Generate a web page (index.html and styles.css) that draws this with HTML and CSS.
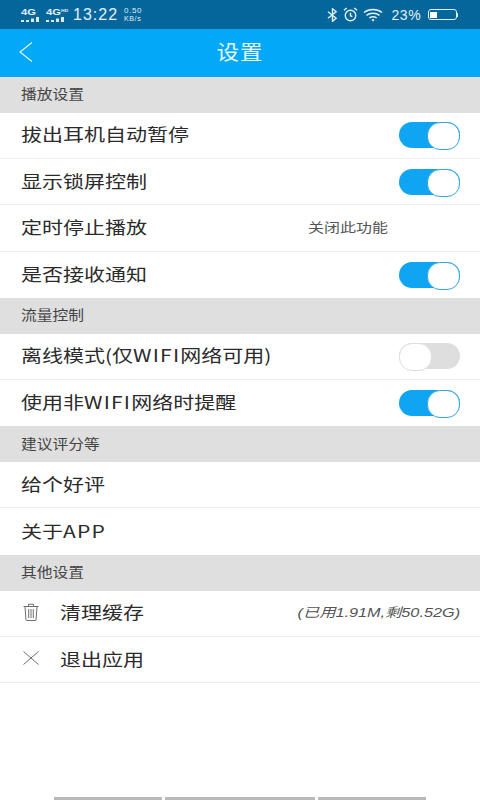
FILE: index.html
```html
<!DOCTYPE html>
<html lang="zh">
<head>
<meta charset="utf-8">
<title>设置</title>
<link rel="stylesheet" href="styles.css">
</head>
<body>
<div class="app">
  <div class="status">
    <div class="status-left">
      <div class="sig"><span class="sig-t">4G</span><svg width="19" height="5" viewBox="0 0 19 5"><path d="M0 3h3v2H0zM5 3h3v2H5zM10 1.500h3V5h-3zM15 0h3v5h-3z" fill="#dcebf3"/></svg></div>
      <div class="sig sig2"><span class="sig-t">4G<sup class="hd">HD</sup></span><svg width="19" height="5" viewBox="0 0 19 5"><path d="M0 3h3v2H0zM5 3h3v2H5zM10 1.500h3V5h-3zM15 0h3v5h-3z" fill="#dcebf3"/></svg></div>
      <span class="time">13:22</span>
      <span class="speed"><span>0.50</span><span class="speed-u">KB/s</span></span>
    </div>
    <div class="status-right">
      <svg class="ic-bt" width="11" height="14" viewBox="0 0 12 15" fill="none" stroke="#e4f0f6" stroke-width="1.500"><path d="M1 4l9 7-4 3.300V.7l4 3.300-9 7"/></svg>
      <svg class="ic-al" width="15" height="15" viewBox="0 0 16 16" fill="none" stroke="#e4f0f6" stroke-width="1.500"><circle cx="8" cy="9" r="5.600"/><path d="M8 6v3.300l2 1M1 3.500L4 1M15 3.500L12 1"/></svg>
      <svg class="ic-wf" width="20" height="14" viewBox="0 0 20 14" fill="none" stroke="#e4f0f6" stroke-width="1.500"><path d="M1 4.500C6 .5 14 .5 19 4.500M3.500 7.300C7 4.500 13 4.500 16.500 7.300M6.300 10C8.500 8.500 11.500 8.500 13.700 10"/><path d="M8.500 12L10 10.800l1.500 1.200L10 13.500z" fill="#e4f0f6" stroke="none"/></svg>
      <span class="pct">23%</span>
      <div class="batt"><div class="batt-fill"></div></div><div class="batt-tip"></div>
    </div>
  </div>
  <header class="nav">
    <svg class="back" width="14" height="20" viewBox="0 0 14 20" fill="none" stroke="#e6f7ff" stroke-width="1.100"><path d="M13 .5L1 10l12 9.500"/></svg>
    <h1 class="title">设置</h1>
  </header>

  <div class="sec"><span class="sec-t">播放设置</span></div>
  <div class="row"><span class="lbl">拔出耳机自动暂停</span><span class="sw on"></span></div>
  <div class="row"><span class="lbl">显示锁屏控制</span><span class="sw on"></span></div>
  <div class="row"><span class="lbl">定时停止播放</span><span class="val">关闭此功能</span></div>
  <div class="row last"><span class="lbl">是否接收通知</span><span class="sw on"></span></div>

  <div class="sec"><span class="sec-t">流量控制</span></div>
  <div class="row"><span class="lbl">离线模式(仅<span class="en">WIFI</span>网络可用)</span><span class="sw off"></span></div>
  <div class="row last"><span class="lbl">使用非<span class="en">WIFI</span>网络时提醒</span><span class="sw on"></span></div>

  <div class="sec"><span class="sec-t">建议评分等</span></div>
  <div class="row"><span class="lbl">给个好评</span></div>
  <div class="row last"><span class="lbl">关于<span class="en">APP</span></span></div>

  <div class="sec"><span class="sec-t">其他设置</span></div>
  <div class="row">
    <svg class="ic" width="16" height="18" viewBox="0 0 16 18" fill="none" stroke="#6e6e6e" stroke-width="1"><path d="M.5 3.500h15M5.500 3.300V1.200h5v2.100M2 3.500l1 13.500c0 .3.300.5.500.5h9c.2 0 .5-.2.500-.5l1-13.500M5.700 6v9M8 6v9M10.300 6v9"/></svg>
    <span class="lbl">清理缓存</span>
    <span class="cache">(已用1.91M,剩50.52G)</span>
  </div>
  <div class="row end">
    <svg class="ic" width="16" height="14" viewBox="0 0 16 14" fill="none" stroke="#6e6e6e" stroke-width="1"><path d="M.5 .5l15 13M15.500 .5l-15 13"/></svg>
    <span class="lbl">退出应用</span>
  </div>

  <div class="spacer"></div>
  <div class="home"><span class="seg s1"></span><span class="seg s2"></span><span class="seg s1"></span></div>
</div>
</body>
</html>
```
FILE: styles.css
```css
* { box-sizing: border-box; }
html, body { margin: 0; padding: 0; }
body { width: 480px; height: 800px; overflow: hidden; background: #fff; font-family: "Noto Sans CJK SC", "Liberation Sans", sans-serif; }
.app { width: 480px; height: 800px; display: flex; flex-direction: column; }

.status { height: 29px; background: #04669b; display: flex; justify-content: space-between; align-items: center; padding: 0 22px 0 21px; color: #e4f0f6; font-family: "Liberation Sans", sans-serif; }
.status-left, .status-right { display: flex; align-items: center; }
.sig { width: 19px; height: 15px; display: flex; flex-direction: column; line-height: 9px; margin-top: -1px; }
.sig svg { display: block; }
.sig-t { display: block; font-size: 9px; font-weight: 700; height: 10px; line-height: 10px; white-space: nowrap; transform: scaleX(1.25); transform-origin: left; }
.sig2 { margin-left: 6px; }
.hd { font-size: 4px; line-height: 4px; vertical-align: 3px; }
.time { font-size: 16px; margin-left: 8px; letter-spacing: 1px; }
.speed { display: flex; flex-direction: column; font-size: 8px; line-height: 7.500px; margin-left: 6px; letter-spacing: .6px; }
.speed-u { font-size: 7px; }
.ic-al { margin-left: 5px; }
.ic-wf { margin-left: 5px; }
.pct { font-size: 14px; margin-left: 8px; letter-spacing: .7px; }
.batt { width: 29px; height: 11px; border: 1px solid #e4f0f6; border-radius: 3px; margin-left: 6px; padding: 1.500px; }
.batt-fill { width: 7px; height: 100%; background: #fff; }
.batt-tip { width: 1.500px; height: 4px; background: #e4f0f6; }

.nav { height: 48px; background: #03a9f6; display: flex; align-items: center; justify-content: center; position: relative; padding-bottom: 4px; }
.back { position: absolute; left: 19px; top: 13px; }
.title { margin: 0; font-size: 20px; font-weight: 400; color: #e8f8ff; transform: scaleX(1.12); letter-spacing: 1px; }

.sec { height: 35.800px; background: #dfdfdf; display: flex; align-items: center; padding: 0 0 3px 21px; font-size: 13.500px; color: #444; }
.sec-t { display: block; transform: scaleX(1.167); transform-origin: left; }
.row { height: 46.300px; background: #fff; display: flex; align-items: center; padding: 0 20px 0 21px; border-bottom: 1px solid #efefef; }
.row.last { border-bottom: 0; }
.lbl { display: block; flex: none; font-size: 17.500px; line-height: 24px; color: #2b2b2b; white-space: nowrap; transform: scaleX(1.2); transform-origin: left; margin-top: -2px; }
.en { letter-spacing: 1px; }
.val { margin-left: auto; font-size: 13px; line-height: 20px; color: #555; margin-right: 72px; transform: scaleX(1.23); transform-origin: right; margin-top: -3px; }
.cache { margin-left: auto; font-size: 13px; line-height: 20px; font-style: italic; color: #555; font-family: "Liberation Sans", "Noto Sans CJK SC", sans-serif; transform: scaleX(1.25); transform-origin: right; margin-top: 0; }
.ic { flex: none; width: 16px; margin-right: 21px; margin-left: 2px; margin-top: -3px; }

.sw { display: block; position: relative; margin-left: auto; width: 61px; height: 26px; border-radius: 13px; flex: none; }
.sw::after { content: ""; position: absolute; top: 0; width: 31px; height: 26px; border-radius: 13px; background: #fff; }
.sw.on { background: #0fa5f2; }
.sw.on::after { right: 0; border: 1px solid #32a8e0; }
.sw.off { background: #dedede; }
.sw.off::after { left: 0; border: 1px solid #dedede; }

.spacer { flex: 1; }
.home { height: 3px; display: flex; justify-content: center; gap: 3px; }
.seg { display: block; height: 3px; background: #b9b9b9; }
.s1 { width: 108px; }
.s2 { width: 150px; }
```
